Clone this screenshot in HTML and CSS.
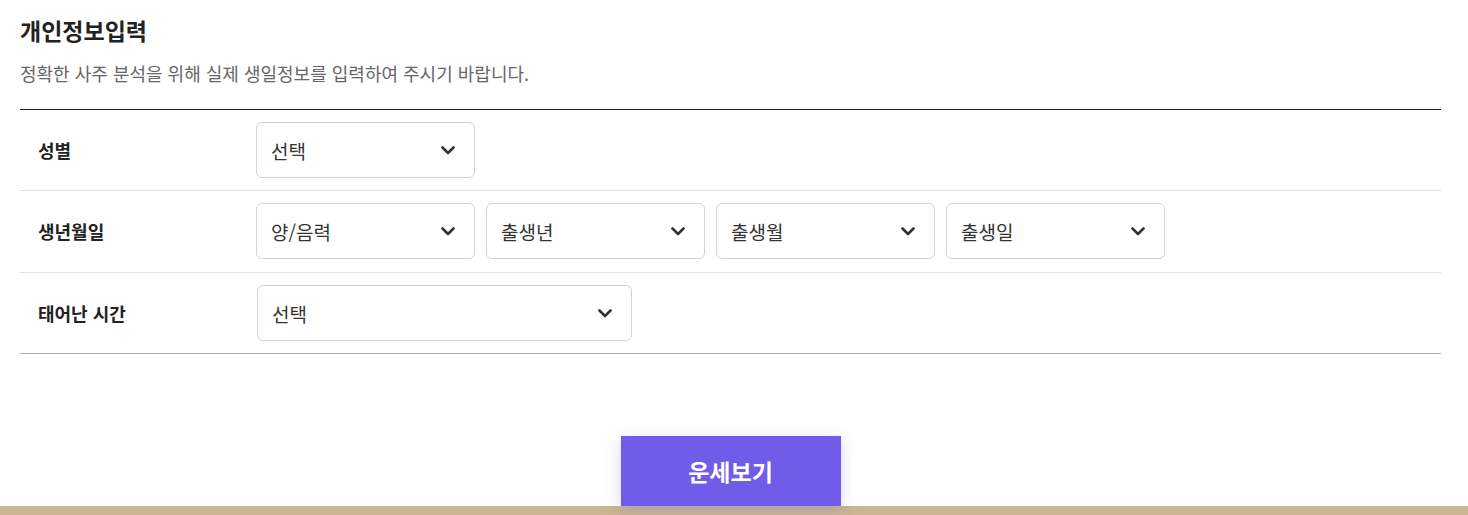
FILE: index.html
```html
<!DOCTYPE html>
<html lang="ko">
<head>
<meta charset="utf-8">
<link rel="stylesheet" href="styles.css">
</head>
<body>
<div class="wrap">
  <h2 class="title">개인정보입력</h2>
  <p class="desc">정확한 사주 분석을 위해 실제 생일정보를 입력하여 주시기 바랍니다.</p>
  <div class="form">
    <div class="row">
      <div class="label">성별</div>
      <div class="fields">
        <div class="select"><span>선택</span><svg class="chev" viewBox="0 0 14 9"><path d="M1.5 1.5 L7 7 L12.5 1.5"/></svg></div>
      </div>
    </div>
    <div class="row">
      <div class="label">생년월일</div>
      <div class="fields">
        <div class="select"><span>양/음력</span><svg class="chev" viewBox="0 0 14 9"><path d="M1.5 1.5 L7 7 L12.5 1.5"/></svg></div>
        <div class="select"><span>출생년</span><svg class="chev" viewBox="0 0 14 9"><path d="M1.5 1.5 L7 7 L12.5 1.5"/></svg></div>
        <div class="select"><span>출생월</span><svg class="chev" viewBox="0 0 14 9"><path d="M1.5 1.5 L7 7 L12.5 1.5"/></svg></div>
        <div class="select"><span>출생일</span><svg class="chev" viewBox="0 0 14 9"><path d="M1.5 1.5 L7 7 L12.5 1.5"/></svg></div>
      </div>
    </div>
    <div class="row last">
      <div class="label">태어난 시간</div>
      <div class="fields">
        <div class="select wide"><span>선택</span><svg class="chev" viewBox="0 0 14 9"><path d="M1.5 1.5 L7 7 L12.5 1.5"/></svg></div>
      </div>
    </div>
  </div>
  <div class="actions">
    <button class="btn">운세보기</button>
  </div>
</div>
<div class="footer"></div>
</body>
</html>
```

FILE: styles.css
```css
* { box-sizing: border-box; }
html, body { margin: 0; padding: 0; }
body {
  font-family: "Noto Sans CJK KR", "Noto Sans", sans-serif;
  color: #222;
  background: #fff;
}
.wrap {
  padding: 0 27px 0 20px;
}
.title {
  margin: 0;
  padding-top: 16px;
  font-size: 23px;
  line-height: 28px;
  font-weight: 700;
  color: #222;
}
.desc {
  margin: 0;
  padding-top: 14px;
  font-size: 18px;
  line-height: 30px;
  color: #666;
}
.form {
  margin-top: 21px;
  border-top: 1px solid #222;
  border-bottom: 1px solid #aaa;
}
.row {
  display: flex;
  align-items: center;
  padding: 12px 0 13px;
  border-bottom: 1px solid #e2e2e2;
}
.row:first-child { padding-bottom: 12px; }
.row.last { border-bottom: 0; padding-bottom: 12px; }
.label {
  width: 236px;
  padding-left: 18px;
  font-size: 18px;
  font-weight: 700;
  color: #222;
}
.fields {
  display: flex;
  gap: 11px;
}
.select {
  width: 219px;
  height: 56px;
  border: 1px solid #d3d3d3;
  border-radius: 6px;
  display: flex;
  align-items: center;
  justify-content: space-between;
  padding: 0 19px 0 14px;
  font-size: 19px;
  color: #333;
  background: #fff;
}
.select.wide { width: 375px; margin-left: 1px; }
.chev {
  width: 14px;
  height: 9px;
  fill: none;
  stroke: #333;
  stroke-width: 2.6;
  stroke-linecap: round;
  stroke-linejoin: round;
}
.actions {
  display: flex;
  justify-content: center;
  padding-top: 82px;
}
.btn {
  width: 220px;
  height: 70px;
  border: 0;
  background: #705ce9;
  color: #fff;
  font-family: "Noto Sans CJK KR", "Noto Sans", sans-serif;
  font-size: 23px;
  font-weight: 700;
  box-shadow: 0 4px 14px rgba(112, 92, 233, 0.25);
}
.footer {
  height: 9px;
  background: #cbb492;
}
```
